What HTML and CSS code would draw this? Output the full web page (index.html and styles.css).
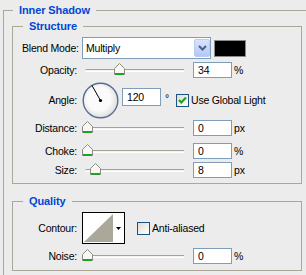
FILE: index.html
```html
<!DOCTYPE html>
<html>
<head>
<meta charset="utf-8">
<link rel="stylesheet" href="styles.css">
</head>
<body>
<fieldset class="box outer">
  <legend class="title">Inner Shadow</legend>
  <fieldset class="box group">
    <legend class="title">Structure</legend>
    <div class="row blend">
      <span class="lbl">Blend Mode:</span>
      <div class="select">
        <span class="sel-text">Multiply</span>
        <span class="sel-btn"><svg width="9" height="6" viewBox="0 0 9 6"><path d="M1 1 L4.5 4.5 L8 1" fill="none" stroke="#4d6185" stroke-width="2"/></svg></span>
      </div>
      <span class="swatch"></span>
    </div>
    <div class="row srow r-opacity">
      <span class="lbl">Opacity:</span>
      <div class="slider">
        <span class="track"></span>
        <span class="thumb" style="left:32px"><svg width="11" height="12" viewBox="0 0 11 12"><path d="M0.5 5.5 L5.5 0.5 L10.5 5.5 V11.5 H0.5 Z" fill="#f7f7f4" stroke="#8c8c86"/><rect x="1" y="10" width="9" height="2" fill="#21a121"/></svg></span>
      </div>
      <span class="num">34</span><span class="unit">%</span>
    </div>
    <div class="row r-angle">
      <span class="lbl">Angle:</span>
      <svg class="dial" width="37" height="37" viewBox="0 0 37 37">
        <defs>
          <radialGradient id="dg" cx="0.45" cy="0.45" r="0.6">
            <stop offset="0.55" stop-color="#fbfbfb"/>
            <stop offset="1" stop-color="#d9d9d6"/>
          </radialGradient>
        </defs>
        <circle cx="18.5" cy="18.5" r="17.3" fill="url(#dg)" stroke="#566f94" stroke-width="1.4"/>
        <line x1="18.5" y1="18.5" x2="10" y2="3.5" stroke="#000" stroke-width="1"/>
        <circle cx="18.5" cy="18.5" r="1.6" fill="#000"/>
      </svg>
      <span class="num num-angle">120</span><span class="deg">°</span>
      <span class="check"><svg width="11" height="11" viewBox="0 0 11 11"><path d="M2 5 L4.3 7.5 L9 2.5" fill="none" stroke="#21a121" stroke-width="2.2"/></svg></span>
      <span class="check-lbl">Use Global Light</span>
    </div>
    <div class="row srow r-distance">
      <span class="lbl">Distance:</span>
      <div class="slider">
        <span class="track"></span>
        <span class="thumb" style="left:0px"><svg width="11" height="12" viewBox="0 0 11 12"><path d="M0.5 5.5 L5.5 0.5 L10.5 5.5 V11.5 H0.5 Z" fill="#f7f7f4" stroke="#8c8c86"/><rect x="1" y="10" width="9" height="2" fill="#21a121"/></svg></span>
      </div>
      <span class="num">0</span><span class="unit">px</span>
    </div>
    <div class="row srow r-choke">
      <span class="lbl">Choke:</span>
      <div class="slider">
        <span class="track"></span>
        <span class="thumb" style="left:0px"><svg width="11" height="12" viewBox="0 0 11 12"><path d="M0.5 5.5 L5.5 0.5 L10.5 5.5 V11.5 H0.5 Z" fill="#f7f7f4" stroke="#8c8c86"/><rect x="1" y="10" width="9" height="2" fill="#21a121"/></svg></span>
      </div>
      <span class="num">0</span><span class="unit">%</span>
    </div>
    <div class="row srow r-size">
      <span class="lbl">Size:</span>
      <div class="slider">
        <span class="track"></span>
        <span class="thumb" style="left:8px"><svg width="11" height="12" viewBox="0 0 11 12"><path d="M0.5 5.5 L5.5 0.5 L10.5 5.5 V11.5 H0.5 Z" fill="#f7f7f4" stroke="#8c8c86"/><rect x="1" y="10" width="9" height="2" fill="#21a121"/></svg></span>
      </div>
      <span class="num">8</span><span class="unit">px</span>
    </div>
  </fieldset>
  <fieldset class="box group quality">
    <legend class="title">Quality</legend>
    <div class="row r-contour">
      <span class="lbl">Contour:</span>
      <div class="contour">
        <span class="c-prev"><svg width="29" height="28" viewBox="0 0 29 28"><rect width="29" height="28" fill="#fff"/><polygon points="0,28 29,0 29,28" fill="#aca899"/></svg></span>
        <span class="c-arrow"><svg width="5" height="3" viewBox="0 0 5 3"><polygon points="0,0 5,0 2.5,3" fill="#000"/></svg></span>
      </div>
      <span class="check check-off"></span>
      <span class="check-lbl">Anti-aliased</span>
    </div>
    <div class="row srow r-noise">
      <span class="lbl">Noise:</span>
      <div class="slider">
        <span class="track"></span>
        <span class="thumb" style="left:0px"><svg width="11" height="12" viewBox="0 0 11 12"><path d="M0.5 5.5 L5.5 0.5 L10.5 5.5 V11.5 H0.5 Z" fill="#f7f7f4" stroke="#8c8c86"/><rect x="1" y="10" width="9" height="2" fill="#21a121"/></svg></span>
      </div>
      <span class="num">0</span><span class="unit">%</span>
    </div>
  </fieldset>
</fieldset>
</body>
</html>
```
FILE: styles.css
```css
* { box-sizing: border-box; }
html, body { margin: 0; padding: 0; }
body {
  width: 306px;
  height: 275px;
  overflow: hidden;
  background: #ececec;
  font-family: "Liberation Sans", Arial, sans-serif;
  font-size: 10.5px;
  letter-spacing: -0.2px;
  line-height: 13px;
  color: #000;
}
.box {
  border: 1px solid #aca899;
  margin: 0;
  min-width: 0;
}
.outer {
  margin: 4px 0 0 3px;
  padding: 3px 8px 4px 8px;
  border-bottom: 0;
  width: 308px;
}
.title {
  padding: 0 6px;
  margin-left: 1px;
  font-weight: bold;
  font-size: 11px;
  letter-spacing: -0.1px;
  line-height: 13px;
  color: #0046d5;
}
.group {
  width: 290px;
  padding: 4px 0 5px 9px;
}
.quality {
  margin-top: 11px;
  padding-bottom: 6px;
}
.row {
  display: flex;
  align-items: center;
}
.lbl {
  flex: none;
  width: 55px;
  margin-right: 5px;
  text-align: right;
  white-space: nowrap;
}
.blend { height: 22px; }
.select {
  width: 129px;
  height: 22px;
  border: 1px solid #7f9db9;
  background: #fff;
  display: flex;
  align-items: center;
  padding: 1px 0 1px 1px;
}
.sel-text { flex: 1; padding-left: 2px; }
.sel-btn {
  width: 16px;
  height: 18px;
  border: 1px solid #b7cbf5;
  border-radius: 2px;
  background: linear-gradient(#d9e4fd, #b3c7f6);
  display: flex;
  align-items: center;
  justify-content: center;
}
.swatch {
  width: 32px;
  height: 17px;
  margin-left: 3px;
  background: #000;
  border: 1px solid #8a8a8a;
}
.srow { height: 16px; }
.r-opacity { margin-top: 3px; }
.r-angle { margin-top: 3px; height: 38px; }
.r-distance { margin-top: 1px; }
.r-choke { margin-top: 7px; }
.r-size { margin-top: 3px; }
.slider {
  position: relative;
  width: 102px;
  height: 16px;
  margin-right: 9px;
}
.track {
  position: absolute;
  left: 3px;
  right: 0;
  top: 7px;
  height: 3px;
  border-top: 1px solid #a5a295;
  border-bottom: 1px solid #fff;
  background: #f4f3ee;
  border-radius: 2px 0 0 2px;
}
.thumb {
  position: absolute;
  top: 1px;
  width: 11px;
  height: 12px;
}
.thumb svg { display: block; }
.num {
  width: 39px;
  height: 16px;
  border: 1px solid #7f9db9;
  background: #fff;
  padding-left: 4px;
  line-height: 14px;
}
.unit { margin-left: 2px; }
.dial { display: block; margin-right: 3px; }
.num-angle {
  height: 18px;
  line-height: 16px;
  align-self: flex-start;
  margin-top: 7px;
}
.deg { width: 15px; padding-left: 4px; margin-bottom: 3px; }
.check {
  width: 13px;
  height: 13px;
  border: 1px solid #1c5180;
  background: linear-gradient(135deg, #dcdcd6, #fff);
  display: flex;
  align-items: center;
  justify-content: center;
}
.check-lbl { margin-left: 2px; }
.r-contour { height: 32px; }
.contour {
  width: 43px;
  height: 32px;
  border: 1px solid #000;
  background: #fff;
  padding: 1px;
  display: flex;
}
.c-prev svg { display: block; }
.c-arrow {
  flex: 1;
  display: flex;
  align-items: center;
  justify-content: center;
}
.check-off { margin-left: 12px; }
.r-noise { margin-top: 4px; }
```
